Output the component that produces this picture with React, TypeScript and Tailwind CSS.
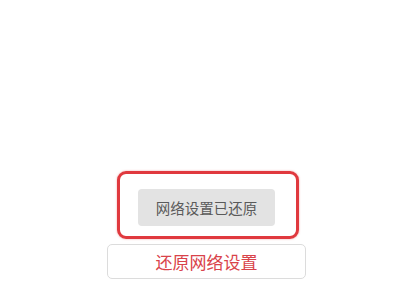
export default function App() {
  return (
    <div
      className="w-[400px] h-[300px] bg-white overflow-hidden pt-[171px]"
      style={{ fontFamily: '"Noto Sans CJK SC", "Noto Sans", sans-serif' }}
    >
      <div className="ml-[117px] w-[182px] h-[68px] border-[3px] border-[#e0393e] rounded-[9px] pl-[18px] pt-[15px] shadow-[0_0_2px_rgba(224,57,62,0.5)]">
        <div className="w-[137px] h-[37px] bg-[#e3e3e3] rounded-[4px] flex items-center justify-center text-[14.5px] text-[#5a5a5a]">
          网络设置已还原
        </div>
      </div>
      <div className="ml-[107px] mt-[5px] w-[199px] h-[35px] border border-[#dcdcdc] rounded-[5px] flex items-center justify-center text-[17px] text-[#d9434a]">
        还原网络设置
      </div>
    </div>
  );
}
